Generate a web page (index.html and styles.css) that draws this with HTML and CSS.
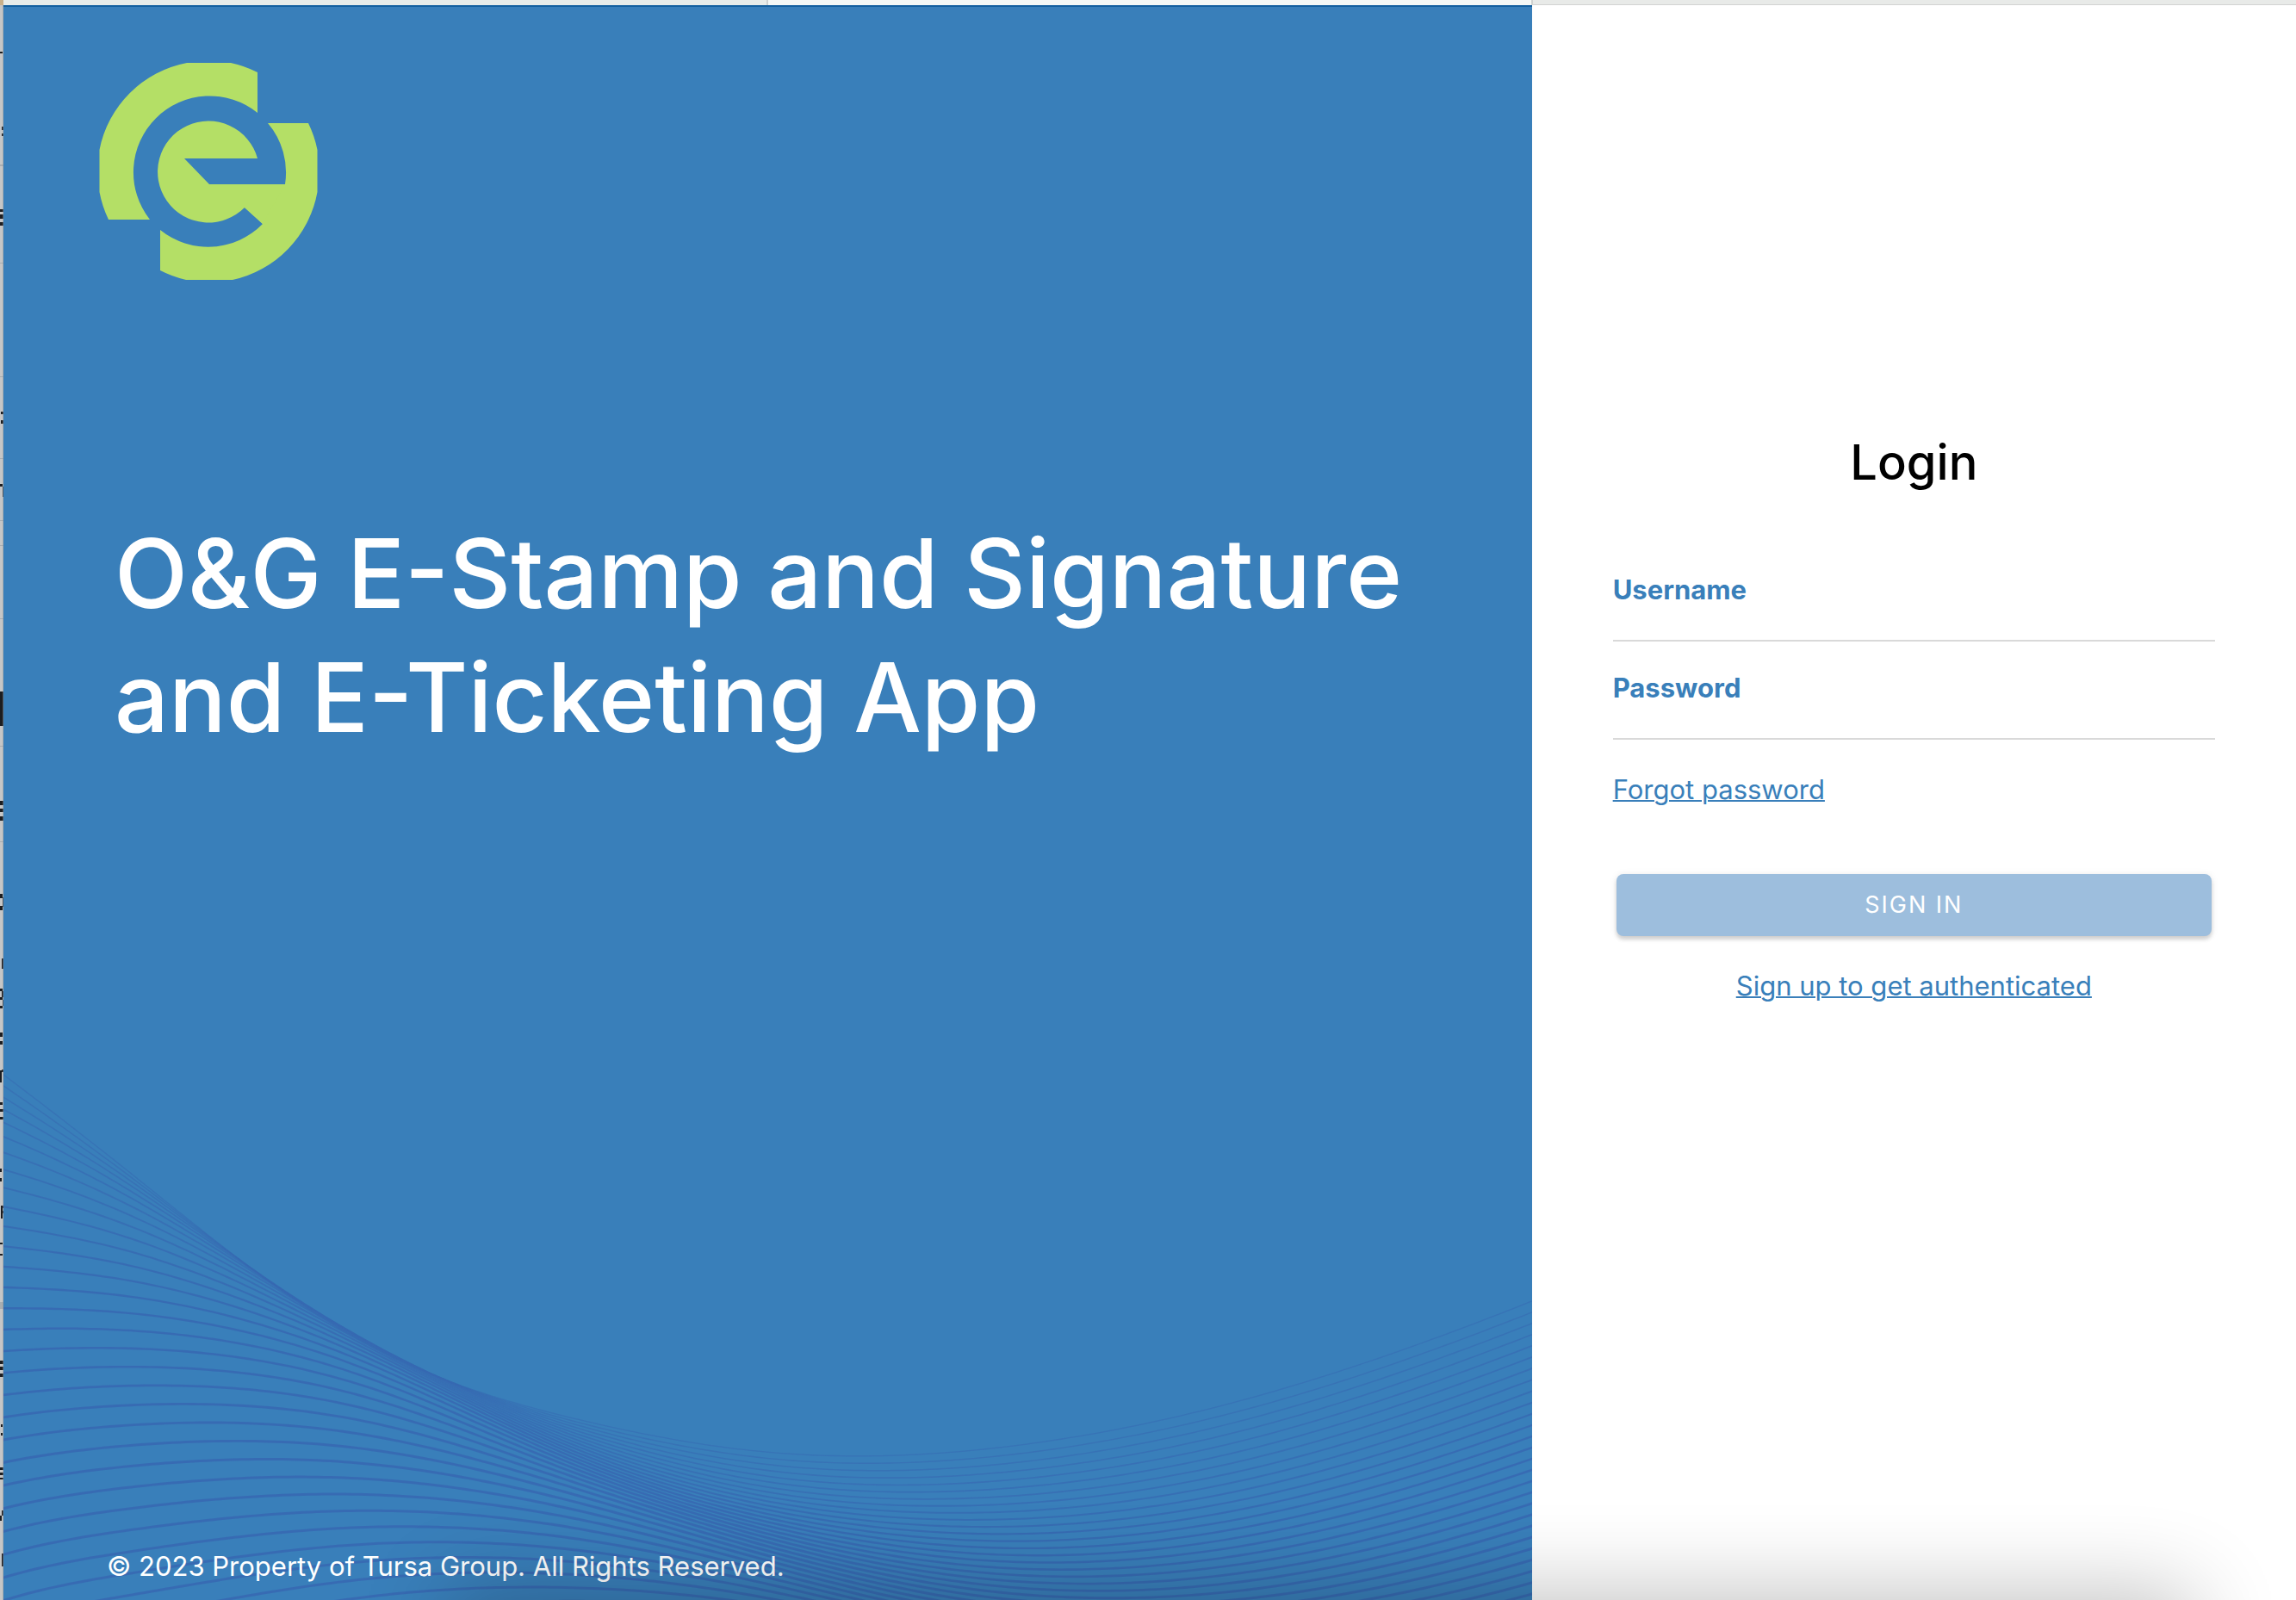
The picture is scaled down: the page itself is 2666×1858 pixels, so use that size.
FILE: index.html
```html
<!DOCTYPE html>
<html lang="en">
<head>
<meta charset="utf-8">
<title>Login</title>
<link rel="stylesheet" href="styles.css">
</head>
<body>
<div class="page">
  <div class="topbar">
    <span class="topbar-corner"></span>
    <span class="topbar-tab"></span>
    <span class="topbar-tab topbar-tab-active"></span>
    <span class="topbar-rest"></span>
  </div>
  <div class="body">
    <svg class="edge" width="4" height="1852" aria-hidden="true">
      <rect width="4" height="1852" fill="#c6c6c6"/>
      <path fill="#a9adb0" d="M0 185h4v2H0zM0 299h4v1H0zM0 431h4v1H0zM0 526h4v1H0zM0 598h4v1H0zM0 627h4v1H0zM0 712h4v1H0zM0 860h4v1H0zM0 971h4v1H0zM0 1506h4v8H0z"/>
      <path fill="#1c1d20" d="M0 54h3v2H0zM2 141h2v4h-2zM2 149h2v3h-2zM0 237h4v3H0zM0 243h4v5H0zM0 252h4v4H0zM1 472h3v3H1zM1 482h3v4H1zM0 556h3v3H0zM3 559h1v12h-1zM0 797h4v40H0zM0 924h4v5H0zM0 933h4v4H0zM0 942h4v5H0zM0 1032h3v5H0zM3 1036h1v11h-1zM0 1046h3v5H0zM2 1107h2v12h-2zM0 1142h3v3H0zM2 1145h2v7h-2zM0 1152h3v3H0zM3 1155h1v7h-1zM0 1162h3v3H0zM0 1193h3v5H0zM0 1203h3v4H0zM0 1237h2v14H0zM2 1236h2v3h-2zM0 1274h3v3H0zM0 1282h4v3H0zM0 1291h4v3H0zM0 1351h2v4H0zM0 1362h2v4H0zM1 1394h3v3H1zM1 1397h2v12H1zM1 1400h3v3H1zM0 1437h3v2H0zM0 1450h3v2H0zM0 1574h4v4H0zM0 1581h4v4H0zM0 1589h4v4H0zM1 1648h2v3H1zM1 1658h2v3H1zM0 1698h4v3H0zM0 1704h4v3H0zM0 1710h4v2H0zM2 1748h2v6h-2zM0 1754h2v6H0zM2 1798h2v15h-2z"/>
      <rect x="3" width="1" height="1852" fill="#8b9298" opacity=".5"/>
    </svg>
    <section class="hero">
      <svg class="waves" viewBox="4 1158 1775 700" preserveAspectRatio="none" aria-hidden="true"><g id="waves" fill="none" stroke="#3769b2"></g></svg>
      <svg class="logo" viewBox="115 73 254 252" role="img" aria-label="Company logo">
        <path fill="#b4df66" d="M299 84V131A88.6 88.6 0 0 0 174 255H126A128 128 0 0 1 115.500 223V174A128 128 0 0 1 217 73H268A128 128 0 0 1 299 84Z"/>
        <path fill="#b4df66" d="M311 143H358A128 128 0 0 1 368.500 174V223A128 128 0 0 1 270 325H216A128 128 0 0 1 186 314V267A88.600 88.600 0 0 0 305 260L284 241L243 214H331A88.600 88.600 0 0 0 311 143Z"/>
        <path fill="#b4df66" d="M299 184A59 59 0 1 0 284 241L305 260L331 214H243L214 184Z"/>
      </svg>
      <h1 class="title">O&amp;G E-Stamp and Signature and E-Ticketing App</h1>
      <p class="copyright">© 2023 Property of Tursa Group. All Rights Reserved.</p>
    </section>
    <main class="login">
      <form class="form">
        <h2 class="heading">Login</h2>
        <div class="field">
          <label for="username">Username</label>
          <input id="username" type="text">
        </div>
        <div class="field">
          <label for="password">Password</label>
          <input id="password" type="password">
        </div>
        <a class="forgot" href="#">Forgot password</a>
        <button class="submit" type="button" disabled>SIGN IN</button>
        <a class="signup" href="#">Sign up to get authenticated</a>
      </form>
    </main>
  </div>
  <div class="shade"></div>
</div>
<script src="waves.js"></script>
</body>
</html>
```
FILE: styles.css
```css
* { box-sizing: border-box; }

body {
  margin: 0;
  font-family: Inter, "Liberation Sans", sans-serif;
  font-size: 31px;
  line-height: 40px;
  color: #000;
  background: #fff;
}

.page {
  position: relative;
  display: flex;
  flex-direction: column;
  min-height: 100vh;
  overflow: hidden;
}

.topbar { display: flex; height: 6px; }
.topbar-corner { width: 4px; background: #c9b08a; }
.topbar-tab { flex: 1; background: #e8ece9; }
.topbar-tab-active { background: #f5f8f6; border: solid #cfd2d0; border-width: 0 2px; }
.topbar-rest { flex: 1; background: #e8eae8; border-bottom: 1px solid #d2d2d2; }

.body {
  flex: 1;
  display: grid;
  grid-template-columns: 4px minmax(0, 2fr) minmax(0, 1fr);
}

.edge { display: block; }

.hero {
  position: relative;
  display: flex;
  flex-direction: column;
  padding: 65px 111px 19px;
  background: #397fba;
  border-top: 2px solid #135f9f;
  color: #fff;
}

.waves {
  position: absolute;
  left: 0;
  bottom: 0;
  width: 100%;
  height: 700px;
}

.logo { width: 254px; height: 252px; }

.title {
  position: relative;
  margin: 269px 0 0;
  padding: 0 18px;
  font-size: 111px;
  line-height: 144px;
  font-weight: 500;
}

.copyright { position: relative; margin: auto 0 0; padding: 0 9px; }

.login { padding: 495px 94px 0; }

.form { display: flex; flex-direction: column; }

.heading {
  margin: 0 0 58px;
  font-size: 56px;
  line-height: 72px;
  font-weight: 500;
  text-align: center;
}

.field {
  display: flex;
  flex-direction: column;
  padding-top: 34px;
  border-bottom: 2px solid #d9d9d9;
}

.field label { color: #397fba; font-weight: 700; }
.field input { width: 100%; height: 38px; padding: 0; border: 0; outline: 0; background: transparent; font: inherit; }

a { color: #397fba; text-decoration-thickness: 2px; }
.forgot { align-self: flex-start; margin-top: 38px; }

.submit {
  height: 72px;
  margin: 78px 4px 38px;
  border: 0;
  border-radius: 8px;
  background: #9dbedd;
  box-shadow: 0 4px 4px rgba(0, 0, 0, .14), 0 1px 8px rgba(0, 0, 0, .1);
  color: #fff;
  font: inherit;
  font-size: 27px;
  letter-spacing: 2px;
}

.signup { align-self: center; }

.shade {
  position: absolute;
  right: 140px;
  bottom: -110px;
  left: 540px;
  height: 100px;
  box-shadow: 0 0 100px 20px rgba(0, 0, 0, .24);
  pointer-events: none;
}
```
FILE: waves.js
```js
// Contour lines of the hero artwork: heights of the surface at each x, for a few line numbers.
const LINES = [0, 5, 10, 15, 20, 26, 32, 40];
const XS = [-150, 4, 150, 410, 670, 900, 1160, 1450, 1779, 2000];
const HEIGHTS = [
  [1135, 1265, 1405, 1553, 1708, 1893, 2075, 2320],
  [1248, 1320, 1424, 1544, 1672, 1832, 1991, 2203],
  [1361, 1390, 1453, 1545, 1655, 1802, 1955, 2165],
  [1552, 1548, 1559, 1594, 1664, 1774, 1900, 2085],
  [1648, 1665, 1683, 1702, 1729, 1787, 1875, 2000],
  [1687, 1722, 1750, 1774, 1798, 1834, 1885, 1975],
  [1681, 1729, 1773, 1813, 1849, 1891, 1932, 1995],
  [1624, 1683, 1740, 1794, 1846, 1906, 1964, 2040],
  [1511, 1576, 1642, 1707, 1772, 1851, 1929, 2033],
  [1419, 1488, 1557, 1626, 1695, 1779, 1862, 1975]
];

// Natural cubic spline through (xs, ys).
function spline(xs, ys) {
  const n = xs.length, m = new Array(n).fill(0), c = [0], d = [0];
  for (let k = 1; k < n - 1; k++) {
    const a = xs[k] - xs[k - 1], b = xs[k + 1] - xs[k];
    const r = 6 * ((ys[k + 1] - ys[k]) / b - (ys[k] - ys[k - 1]) / a);
    const p = 2 * (a + b) - a * c[k - 1];
    c[k] = b / p;
    d[k] = (r - a * d[k - 1]) / p;
  }
  for (let k = n - 2; k > 0; k--) m[k] = d[k] - c[k] * m[k + 1];
  return x => {
    let k = 0;
    while (k < n - 2 && x > xs[k + 1]) k++;
    const h = xs[k + 1] - xs[k], u = xs[k + 1] - x, v = x - xs[k];
    return (m[k] * u ** 3 + m[k + 1] * v ** 3) / (6 * h)
      + (ys[k] / h - m[k] * h / 6) * u + (ys[k + 1] / h - m[k + 1] * h / 6) * v;
  };
}

const columns = HEIGHTS.map(h => spline(LINES, h));
const group = document.getElementById("waves");
for (let i = 0; i <= 40; i++) {
  const f = spline(XS, columns.map(c => c(i)));
  let d = "";
  for (let x = 0; x <= 1784; x += 8) d += (x ? "L" : "M") + x + " " + f(x).toFixed(2);
  const path = document.createElementNS("http://www.w3.org/2000/svg", "path");
  path.setAttribute("d", d);
  path.setAttribute("stroke-width", Math.min(3, 1.3 + i * 0.08).toFixed(2));
  path.setAttribute("stroke-opacity", Math.min(0.9, 0.55 + i * 0.025).toFixed(2));
  group.appendChild(path);
}
```
